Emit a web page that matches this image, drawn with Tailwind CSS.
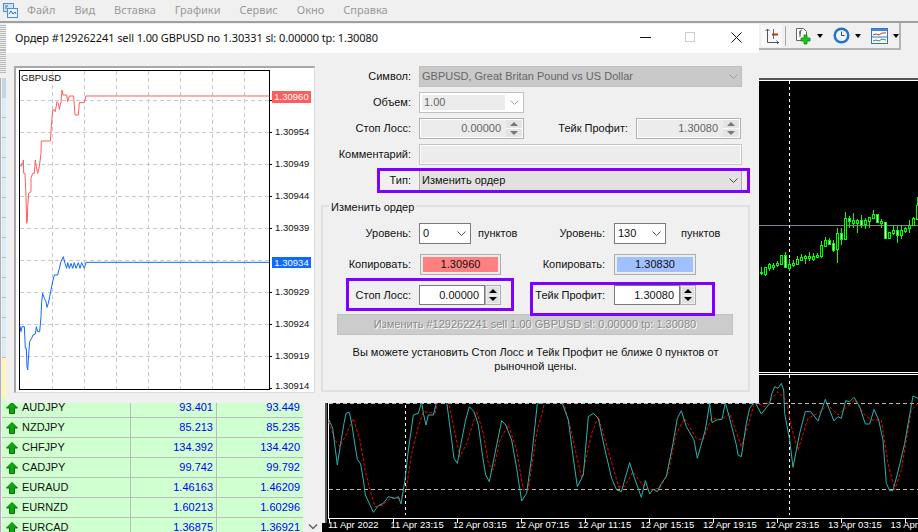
<!DOCTYPE html>
<html lang="ru">
<head>
  <meta charset="UTF-8" />
  <title>Ордер</title>
  <script src="https://cdn.jsdelivr.net/npm/@tailwindcss/browser@4"></script>
</head>
<body class="relative w-[918px] h-[532px] overflow-hidden bg-[#f0f0f0] font-['Noto_Sans',sans-serif] text-[11px] text-[#111]">

  <!-- меню -->
  <div class="h-[23px] flex items-center border-b-2 border-[#a0a0a0] relative">
    <svg class="absolute left-[3px] top-[3px]" width="15" height="15" viewBox="0 0 15 15">
      <rect x="0.5" y="0.5" width="10" height="8" fill="#cfe3fa" stroke="#4a8fd8"/>
      <rect x="4.5" y="5.5" width="10" height="9" fill="#eaf3fd" stroke="#4a8fd8"/>
      <path d="M6 11l2-3 2 3 2-2 1 2" fill="none" stroke="#2d6fb8"/>
      <path d="M2 3h3M2 5h2" stroke="#2d6fb8"/>
    </svg>
    <div class="flex ml-[27px] gap-[19px] text-[#999]">
      <span>Файл</span><span>Вид</span><span>Вставка</span><span>Графики</span><span>Сервис</span><span>Окно</span><span>Справка</span>
    </div>
  </div>

  <!-- панель инструментов -->
  <div class="h-[27px] flex justify-between pr-[17px]">
    <div class="w-[6px] h-[25px] mt-[2px] bg-[repeating-linear-gradient(#b8b8b8_0,#b8b8b8_1px,#f0f0f0_1px,#f0f0f0_2px)]"></div>
    <div class="w-[142px] h-[27px] flex items-center border-r-2 border-b-2 border-[#b4b4b4] pl-[2px]">
      <div class="w-[21px] h-[22px] bg-[#f8f8f8] flex items-center justify-center">
        <svg width="15" height="16" viewBox="0 0 15 16" fill="none">
          <path d="M3.5 1v13.5H15" stroke="#555"/>
          <path d="M1.5 3l2-2 2 2M12.500 12.500l2 2-2 2" stroke="#555"/>
          <path d="M9.500 1v10" stroke="#3a6fb0"/>
          <path d="M8 6.500h6" stroke="#c33a00" stroke-width="2"/>
        </svg>
      </div>
      <div class="w-px h-[20px] bg-[#a8a8a8] ml-[3px]"></div>
      <svg class="ml-[9px]" width="18" height="18" viewBox="0 0 18 18">
        <path d="M1.500 1.500h7l3 3v9h-10z" fill="#fff" stroke="#666"/>
        <path d="M5 5c0-2 2-2 2-2M5 4v6M4 6h2" fill="none" stroke="#444"/>
        <path d="M9 8h3v3h3v3h-3v3H9v-3H6v-3h3z" fill="#19c619" stroke="#0a8a0a" stroke-width="0.800"/>
      </svg>
      <span class="ml-[4px] w-0 h-0 border-x-[3px] border-x-transparent border-t-[4px] border-t-black"></span>
      <svg class="ml-[10px]" width="17" height="17" viewBox="0 0 17 17">
        <circle cx="8.500" cy="8.500" r="8" fill="#1f74cf"/>
        <circle cx="8.500" cy="8.500" r="5.500" fill="#eef4fa"/>
        <path d="M8.500 4.500v4h3" fill="none" stroke="#444"/>
      </svg>
      <span class="ml-[5px] w-0 h-0 border-x-[3px] border-x-transparent border-t-[4px] border-t-black"></span>
      <svg class="ml-[10px]" width="17" height="16" viewBox="0 0 17 16">
        <rect x="0.500" y="0.500" width="16" height="15" fill="#fff" stroke="#2c78c8"/>
        <rect x="1" y="1" width="15" height="2" fill="#3f8ad8"/>
        <path d="M2 7l3-1 3 1 3-2 4 0" fill="none" stroke="#b3402a"/>
        <path d="M1 9h15" stroke="#2c78c8"/>
        <path d="M2 13l3-1 3 1 3-2 4 1" fill="none" stroke="#2a9a3a"/>
      </svg>
      <span class="ml-[5px] w-0 h-0 border-x-[3px] border-x-transparent border-t-[4px] border-t-black"></span>
    </div>
  </div>
  <div class="h-[28px]">
    <div class="w-[6px] h-[24px] bg-[repeating-linear-gradient(#b8b8b8_0,#b8b8b8_1px,#f0f0f0_1px,#f0f0f0_2px)]"></div>
  </div>

  <div class="flex h-[454px]">
    <!-- обзор рынка -->
    <div class="w-[322px] flex shrink-0 font-['Liberation_Sans',sans-serif]">
      <div class="w-[303px] pl-[1px] border-l border-[#b0b0b0] bg-[#f0f0f0]">
        <div class="h-[20px] w-[4px] bg-[#c5d5e2]"></div>
        <div class="h-[260px] bg-[repeating-linear-gradient(#dcecf7_0,#dcecf7_19px,#bbb_19px,#bbb_20px)]"></div>
        <div class="h-[40px] bg-[#fff3b8]"></div>

        <div class="h-[20px] flex items-center border-b border-[#bbb] bg-[#d0ffd0] leading-[19px]">
          <svg class="ml-[4px]" width="12" height="12" viewBox="0 0 12 12"><path d="M6 .5l5.500 5.500H8.500v5.500h-5V6H.5z" fill="#0ea50e" stroke="#067006"/></svg>
          <span class="ml-[4px] w-[108px]">AUDJPY</span>
          <span class="w-[86px] border-l border-[#bbb] h-full text-right pr-[3px] text-[#0000ff]">93.401</span>
          <span class="w-[87px] border-l border-[#bbb] h-full text-right pr-[3px] text-[#0000ff]">93.449</span>
        </div>
        <div class="h-[20px] flex items-center border-b border-[#bbb] bg-[#d0ffd0] leading-[19px]">
          <svg class="ml-[4px]" width="12" height="12" viewBox="0 0 12 12"><path d="M6 .5l5.500 5.500H8.500v5.500h-5V6H.5z" fill="#0ea50e" stroke="#067006"/></svg>
          <span class="ml-[4px] w-[108px]">NZDJPY</span>
          <span class="w-[86px] border-l border-[#bbb] h-full text-right pr-[3px] text-[#0000ff]">85.213</span>
          <span class="w-[87px] border-l border-[#bbb] h-full text-right pr-[3px] text-[#0000ff]">85.235</span>
        </div>
        <div class="h-[20px] flex items-center border-b border-[#bbb] bg-[#d0ffd0] leading-[19px]">
          <svg class="ml-[4px]" width="12" height="12" viewBox="0 0 12 12"><path d="M6 .5l5.500 5.500H8.500v5.500h-5V6H.5z" fill="#0ea50e" stroke="#067006"/></svg>
          <span class="ml-[4px] w-[108px]">CHFJPY</span>
          <span class="w-[86px] border-l border-[#bbb] h-full text-right pr-[3px] text-[#0000ff]">134.392</span>
          <span class="w-[87px] border-l border-[#bbb] h-full text-right pr-[3px] text-[#0000ff]">134.420</span>
        </div>
        <div class="h-[20px] flex items-center border-b border-[#bbb] bg-[#d0ffd0] leading-[19px]">
          <svg class="ml-[4px]" width="12" height="12" viewBox="0 0 12 12"><path d="M6 .5l5.500 5.500H8.500v5.500h-5V6H.5z" fill="#0ea50e" stroke="#067006"/></svg>
          <span class="ml-[4px] w-[108px]">CADJPY</span>
          <span class="w-[86px] border-l border-[#bbb] h-full text-right pr-[3px] text-[#0000ff]">99.742</span>
          <span class="w-[87px] border-l border-[#bbb] h-full text-right pr-[3px] text-[#0000ff]">99.792</span>
        </div>
        <div class="h-[20px] flex items-center border-b border-[#bbb] bg-[#d0ffd0] leading-[19px]">
          <svg class="ml-[4px]" width="12" height="12" viewBox="0 0 12 12"><path d="M6 .5l5.500 5.500H8.500v5.500h-5V6H.5z" fill="#0ea50e" stroke="#067006"/></svg>
          <span class="ml-[4px] w-[108px]">EURAUD</span>
          <span class="w-[86px] border-l border-[#bbb] h-full text-right pr-[3px] text-[#0000ff]">1.46163</span>
          <span class="w-[87px] border-l border-[#bbb] h-full text-right pr-[3px] text-[#0000ff]">1.46209</span>
        </div>
        <div class="h-[20px] flex items-center border-b border-[#bbb] bg-[#d0ffd0] leading-[19px]">
          <svg class="ml-[4px]" width="12" height="12" viewBox="0 0 12 12"><path d="M6 .5l5.500 5.500H8.500v5.500h-5V6H.5z" fill="#0ea50e" stroke="#067006"/></svg>
          <span class="ml-[4px] w-[108px]">EURNZD</span>
          <span class="w-[86px] border-l border-[#bbb] h-full text-right pr-[3px] text-[#0000ff]">1.60213</span>
          <span class="w-[87px] border-l border-[#bbb] h-full text-right pr-[3px] text-[#0000ff]">1.60296</span>
        </div>
        <div class="h-[20px] flex items-center border-b border-[#bbb] bg-[#d0ffd0] leading-[19px]">
          <svg class="ml-[4px]" width="12" height="12" viewBox="0 0 12 12"><path d="M6 .5l5.500 5.500H8.500v5.500h-5V6H.5z" fill="#0ea50e" stroke="#067006"/></svg>
          <span class="ml-[4px] w-[108px]">EURCAD</span>
          <span class="w-[86px] border-l border-[#bbb] h-full text-right pr-[3px] text-[#0000ff]">1.36875</span>
          <span class="w-[87px] border-l border-[#bbb] h-full text-right pr-[3px] text-[#0000ff]">1.36921</span>
        </div>
      </div>
      <div class="flex-1 flex flex-col justify-end items-center pb-[2px]">
        <svg width="10" height="6" viewBox="0 0 10 6" fill="none"><path d="M1 0.500l4 4 4-4" stroke="#666" stroke-width="1.500"/></svg>
      </div>
    </div>

    <!-- графики -->
    <div class="w-[596px] bg-black">
      <svg id="chart" class="block" width="596" height="445" viewBox="322 78 596 445" shape-rendering="crispEdges">
        <rect x="322" y="78" width="3" height="445" fill="#f0f0f0"/>
        <rect x="325" y="78" width="2" height="445" fill="#555"/>
        <rect x="325" y="78" width="593" height="2" fill="#555"/>
        <rect x="327" y="80" width="591" height="1" fill="#fff"/>
        <rect x="328" y="81" width="1" height="437" fill="#fff"/>
        <rect x="329" y="225" width="589" height="1" fill="#77838f"/>
        <rect x="329" y="372" width="589" height="1" fill="#fff"/>
        <rect x="329" y="374" width="589" height="1" fill="#fff"/>
        <path d="M329 403.500H918M329 489.500H918" stroke="#bbb" stroke-dasharray="4 3"/>
        <path d="M789.500 81V372M789.500 375V515M405.500 375V515" stroke="#fff" stroke-dasharray="3 3"/>
        <g id="candles" stroke="#00ff00" stroke-width="1"></g>
        <g transform="translate(320 390) scale(.33333)" fill="none" shape-rendering="auto">
          <polyline stroke="#ff0000" stroke-width="3" stroke-dasharray="9 6" points="26,95 45,150 60,170 80,130 100,85 120,150 135,240 150,300 165,350 190,345 210,325 240,325 258,300 275,190 295,110 310,65 345,70 355,30 385,30 405,130 420,200 440,160 470,65 490,130 505,220 520,240 540,150 565,105 590,180 610,300 625,300 650,130 675,35 730,35 755,130 785,265 815,130 835,80 860,165 890,270 900,300"/>
          <polyline stroke="#2ab5ad" stroke-width="3" points="26,88 38,115 45,170 52,225 62,160 72,100 78,70 88,67 95,100 105,165 112,208 122,222 130,270 136,315 150,345 160,367 175,347 190,340 205,320 225,325 235,320 243,342 255,270 265,180 280,75 295,70 305,35 310,70 318,105 325,75 340,75 350,35 380,35 395,150 402,205 412,220 425,150 437,90 448,50 462,65 475,105 488,200 497,255 508,275 525,190 545,92 557,105 575,150 590,235 605,333 620,310 635,200 652,40 725,35 745,90 758,190 772,290 790,255 805,80 820,70 835,85 855,180 875,265 890,300 900,302"/>
          <g transform="translate(894 0)">
            <polyline stroke="#ff0000" stroke-width="3" stroke-dasharray="9 6" points="0,290 20,290 45,245 70,280 90,300 125,295 150,250 175,130 200,85 235,145 255,150 280,85 310,88 335,70 370,170 395,90 410,35 440,50 480,5 505,30 520,110 540,180 570,85 600,70 630,45 660,75 710,30 740,75 760,90 790,90 810,220 830,300 850,240 880,60 900,40"/>
            <polyline stroke="#2ab5ad" stroke-width="3" points="0,300 10,305 20,270 35,218 48,260 70,322 82,272 95,312 105,298 118,305 130,280 145,260 165,160 178,85 190,62 205,110 228,150 238,205 262,120 275,40 282,98 295,90 312,88 322,38 335,85 355,165 360,195 370,200 385,100 395,55 410,35 430,72 455,40 462,10 470,-10 480,-5 490,-20 497,0 500,70 515,150 525,232 545,130 562,65 578,65 600,93 622,28 648,93 660,80 670,85 683,32 695,35 708,22 725,50 742,102 755,102 768,58 782,90 795,150 805,280 815,302 825,302 845,225 860,160 885,18 900,25"/>
          </g>
        </g>
        <rect x="328" y="518" width="590" height="1" fill="#fff"/>
        <path d="M329.500 519v4M393.500 519v4M457.500 519v4M521.500 519v4M585.500 519v4M649.500 519v4M713.500 519v4M777.500 519v4M841.500 519v4M905.500 519v4" stroke="#fff"/>
      </svg>
      <div class="flex h-[14px] -mt-[5px] pl-[6px] text-white font-['Liberation_Sans',sans-serif] text-[9.5px] leading-[14px] whitespace-nowrap">
        <span class="w-[64px]">11 Apr 2022</span>
        <span class="w-[64px]">11 Apr 23:15</span>
        <span class="w-[64px]">12 Apr 03:15</span>
        <span class="w-[64px]">12 Apr 07:15</span>
        <span class="w-[64px]">12 Apr 11:15</span>
        <span class="w-[64px]">12 Apr 15:15</span>
        <span class="w-[64px]">12 Apr 19:15</span>
        <span class="w-[64px]">12 Apr 23:15</span>
        <span class="w-[64px]">13 Apr 03:15</span>
        <span>13 Apr</span>
      </div>
    </div>
  </div>

  <!-- диалог -->
  <div class="absolute left-[6px] top-[24px] w-[753px] h-[379px] bg-[#f0f0f0] font-['Liberation_Sans',sans-serif]">
    <div class="h-[29px] bg-white flex items-center pl-[9px] relative font-['Noto_Sans',sans-serif] tracking-[-0.1px]">
      <span>Ордер #129262241 sell 1.00 GBPUSD по 1.30331 sl: 0.00000 tp: 1.30080</span>
      <svg class="absolute left-[634px] top-[13px]" width="11" height="1"><rect width="11" height="1" fill="#111"/></svg>
      <svg class="absolute left-[679px] top-[8px]" width="10" height="10"><rect x="0.500" y="0.500" width="9" height="9" fill="none" stroke="#ccc"/></svg>
      <svg class="absolute left-[725px] top-[8px]" width="11" height="11"><path d="M.5.5l10 10M10.500.5l-10 10" stroke="#111"/></svg>
    </div>

    <div class="flex pl-[8px] pt-[13px]">
      <!-- мини график -->
      <div class="relative w-[301px] h-[327px] border-l-2 border-t-2 border-r border-b border-l-[#a8a8a8] border-t-[#a8a8a8] border-r-[#dcdcdc] border-b-[#dcdcdc] bg-white shrink-0 text-[9.5px]">
        <svg class="block" width="298" height="324" viewBox="15 68 298 324" shape-rendering="crispEdges">
          <path d="M51.500 71V389M83.500 71V389M115.500 71V389M147.500 71V389M179.500 71V389M211.500 71V389M243.500 71V389" stroke="#c8c8c8" stroke-dasharray="4 3"/>
          <path d="M19 100.500H268M19 132.500H268M19 164.500H268M19 196.500H268M19 228.500H268M19 260.500H268M19 292.500H268M19 324.500H268M19 356.500H268" stroke="#c8c8c8" stroke-dasharray="4 3"/>
          <rect x="18.500" y="70.500" width="250" height="319" fill="none" stroke="#000"/>
          <path d="M268 100.500h3M268 132.500h3M268 164.500h3M268 196.500h3M268 228.500h3M268 292.500h3M268 324.500h3M268 356.500h3M268 388.500h3" stroke="#000"/>
          <g transform="translate(0 60) scale(.33333)" fill="none" stroke="#ff5c5c" stroke-width="3" shape-rendering="auto">
            <polyline points="57,318 62,318 62,310 67,310 67,300 68,340 72,340 75,410 77,490 79,480 80,440 83,400 90,395 90,355 95,340 100,340 103,300 106,320 110,340 115,320 120,280 121,243 148,243 152,185 155,150 160,150 163,155 168,125 172,130 175,148 180,125 183,90 186,105 197,105 200,125 205,108 218,108 222,165 232,165 235,128 250,128 255,108 805,108"/>
          </g>
          <g transform="translate(0 230) scale(.33333)" fill="none" stroke="#0f68ff" stroke-width="3" shape-rendering="auto">
            <polyline points="57,288 60,305 63,290 70,290 73,355 76,355 78,410 80,420 83,375 86,335 92,325 96,315 103,312 106,290 110,305 116,305 120,260 122,215 125,190 130,205 135,215 138,232 142,220 146,200 150,180 155,155 160,135 170,135 175,115 180,95 187,80 192,100 197,115 200,98 205,115 210,100 215,115 220,98 225,115 232,98 237,115 242,98 250,115 255,97 805,97"/>
          </g>
        </svg>
        <span class="absolute left-[5px] top-[3px] leading-[14px]">GBPUSD</span>
        <div class="absolute left-[256px] top-[23px] w-[39px] h-[12px] bg-[#ff5c5c] text-white leading-[12px] text-center">1.30960</div>
        <div class="absolute left-[256px] top-[189px] w-[39px] h-[11px] bg-[#0f68ff] text-white leading-[11px] text-center">1.30934</div>
        <span class="absolute left-[259px] top-[57px] leading-[14px]">1.30954</span>
        <span class="absolute left-[259px] top-[89px] leading-[14px]">1.30949</span>
        <span class="absolute left-[259px] top-[121px] leading-[14px]">1.30944</span>
        <span class="absolute left-[259px] top-[153px] leading-[14px]">1.30939</span>
        <span class="absolute left-[259px] top-[217px] leading-[14px]">1.30929</span>
        <span class="absolute left-[259px] top-[249px] leading-[14px]">1.30924</span>
        <span class="absolute left-[259px] top-[281px] leading-[14px]">1.30919</span>
        <span class="absolute left-[259px] top-[311px] leading-[14px]">1.30914</span>
      </div>

      <!-- форма -->
      <div class="w-[429px] ml-[6px] flex flex-col gap-[5px]">
        <div class="flex h-[21px] items-center">
          <label class="w-[90px] text-right">Символ:</label>
          <div class="ml-[8px] w-[323px] h-full bg-[#c9c9c9] border border-[#c0c0c0] flex items-center justify-between pl-[2px] pr-[3px] text-[#666]">
            <span>GBPUSD, Great Britan Pound vs US Dollar</span>
            <svg width="9" height="5" fill="none"><path d="M.5.5l4 4 4-4" stroke="#999"/></svg>
          </div>
        </div>
        <div class="flex h-[21px] items-center">
          <label class="w-[90px] text-right">Объем:</label>
          <div class="ml-[8px] w-[105px] h-full bg-white border border-[#c0c0c0] flex items-center p-[2px]">
            <span class="w-[83px] h-full bg-[#ececec] text-[#666] pl-[2px] leading-[15px]">1.00</span>
            <svg class="ml-[5px]" width="9" height="5" fill="none"><path d="M.5.5l4 4 4-4" stroke="#aaa"/></svg>
          </div>
        </div>
        <div class="flex h-[21px] items-center">
          <label class="w-[90px] text-right">Стоп Лосс:</label>
          <div class="ml-[8px] w-[105px] h-full border border-[#b0b0b0] bg-white flex p-px">
            <span class="flex-1 bg-[#ececec] text-right pr-[5px] text-[#666] leading-[17px]">0.00000</span>
            <div class="w-[16px] flex flex-col gap-px bg-white">
              <div class="flex-1 bg-[#e4e4e4] flex items-center justify-center"><span class="w-0 h-0 border-x-[4px] border-x-transparent border-b-[4px] border-b-[#777]"></span></div>
              <div class="flex-1 bg-[#e4e4e4] flex items-center justify-center"><span class="w-0 h-0 border-x-[4px] border-x-transparent border-t-[4px] border-t-[#777]"></span></div>
            </div>
          </div>
          <label class="w-[104px] text-right">Тейк Профит:</label>
          <div class="ml-[8px] w-[105px] h-full border border-[#b0b0b0] bg-white flex p-px">
            <span class="flex-1 bg-[#ececec] text-right pr-[5px] text-[#666] leading-[17px]">1.30080</span>
            <div class="w-[16px] flex flex-col gap-px bg-white">
              <div class="flex-1 bg-[#e4e4e4] flex items-center justify-center"><span class="w-0 h-0 border-x-[4px] border-x-transparent border-b-[4px] border-b-[#777]"></span></div>
              <div class="flex-1 bg-[#e4e4e4] flex items-center justify-center"><span class="w-0 h-0 border-x-[4px] border-x-transparent border-t-[4px] border-t-[#777]"></span></div>
            </div>
          </div>
        </div>
        <div class="flex h-[21px] items-center">
          <label class="w-[90px] text-right">Комментарий:</label>
          <div class="ml-[8px] w-[323px] h-full bg-[#ececec] border border-[#c4c4c4] outline outline-white -outline-offset-2"></div>
        </div>
        <div class="flex h-[21px] items-center">
          <label class="w-[90px] text-right">Тип:</label>
          <div class="ml-[8px] w-[323px] h-full bg-[#e1e1e1] border border-[#adadad] flex items-center justify-between pl-[2px] pr-[3px]">
            <span>Изменить ордер</span>
            <svg width="9" height="5" fill="none"><path d="M.5.5l4 4 4-4" stroke="#444"/></svg>
          </div>
        </div>

        <!-- группа -->
        <div class="relative mt-[9px] h-[187px] border-2 border-[#e0e0e0] pt-[16px]">
          <span class="absolute left-[6px] -top-[7px] bg-[#f0f0f0] px-[2px] leading-[14px]">Изменить ордер</span>

          <div class="flex h-[21px] items-center">
            <label class="w-[88px] text-right">Уровень:</label>
            <div class="ml-[8px] w-[52px] h-full bg-white border border-[#7a7a7a] flex items-center justify-between pl-[3px] pr-[4px]">
              <span>0</span><svg width="9" height="5" fill="none"><path d="M.5.5l4 4 4-4" stroke="#555"/></svg>
            </div>
            <span class="ml-[7px] w-[47px]">пунктов</span>
            <label class="w-[80px] text-right">Уровень:</label>
            <div class="ml-[9px] w-[52px] h-full bg-white border border-[#7a7a7a] flex items-center justify-between pl-[3px] pr-[4px]">
              <span>130</span><svg width="9" height="5" fill="none"><path d="M.5.5l4 4 4-4" stroke="#555"/></svg>
            </div>
            <span class="ml-[15px]">пунктов</span>
          </div>

          <div class="flex h-[21px] items-center mt-[10px]">
            <label class="w-[88px] text-right">Копировать:</label>
            <div class="ml-[9px] w-[81px] h-[21px] border border-[#adadad] bg-[#ececec] p-[2px]">
              <div class="h-full bg-[#ff8080] text-center leading-[15px]">1.30960</div>
            </div>
            <label class="w-[104px] text-right">Копировать:</label>
            <div class="ml-[9px] w-[82px] h-[21px] border border-[#adadad] bg-[#ececec] p-[2px]">
              <div class="h-full bg-[#a0c0ff] text-center leading-[15px]">1.30830</div>
            </div>
          </div>

          <div class="flex h-[20px] items-center mt-[10px]">
            <label class="w-[88px] text-right">Стоп Лосс:</label>
            <div class="ml-[8px] w-[66px] h-full bg-white border border-[#7a7a7a] text-right pr-[5px] leading-[18px]">0.00000</div>
            <div class="w-[16px] h-full flex flex-col gap-px border border-[#adadad] p-px">
              <div class="flex-1 bg-[#e1e1e1] flex items-center justify-center"><span class="w-0 h-0 border-x-[4px] border-x-transparent border-b-[4px] border-b-black"></span></div>
              <div class="flex-1 bg-[#e1e1e1] flex items-center justify-center"><span class="w-0 h-0 border-x-[4px] border-x-transparent border-t-[4px] border-t-black"></span></div>
            </div>
            <label class="w-[104px] text-right">Тейк Профит:</label>
            <div class="ml-[9px] w-[66px] h-full bg-white border border-[#7a7a7a] text-right pr-[5px] leading-[18px]">1.30080</div>
            <div class="w-[16px] h-full flex flex-col gap-px border border-[#adadad] p-px">
              <div class="flex-1 bg-[#e1e1e1] flex items-center justify-center"><span class="w-0 h-0 border-x-[4px] border-x-transparent border-b-[4px] border-b-black"></span></div>
              <div class="flex-1 bg-[#e1e1e1] flex items-center justify-center"><span class="w-0 h-0 border-x-[4px] border-x-transparent border-t-[4px] border-t-black"></span></div>
            </div>
          </div>

          <div class="ml-[14px] mt-[9px] w-[396px] h-[21px] bg-[#cccccc] border border-[#c2c2c2] text-center text-[#8a8a8a] leading-[19px] text-shadow-[1px_1px_0_#fff]">Изменить #129262241 sell 1.00 GBPUSD sl: 0.00000 tp: 1.30080</div>

          <p class="mt-[10px] text-center leading-[14px] whitespace-nowrap">Вы можете установить Стоп Лосс и Тейк Профит не ближе 0 пунктов от<br>рыночной цены.</p>
        </div>
      </div>
    </div>
  </div>

  <!-- выделения поверх скриншота -->
  <div class="absolute left-[377px] top-[168px] w-[373px] h-[25px] border-[3px] border-[#7f00ff]"></div>
  <div class="absolute left-[346px] top-[278px] w-[168px] h-[33px] border-[3px] border-[#7f00ff]"></div>
  <div class="absolute left-[530px] top-[282px] w-[185px] h-[34px] border-[3px] border-[#7f00ff]"></div>

  <script>
    // x, верх/низ тени, верх/низ тела, заливка
    const candles = [
      [19,232,256,246,249,0],[31,230,258,232,252,0],[43,220,243,223,233,0],[55,220,240,224,230,0],
      [67,214,232,220,226,0],[79,195,224,196,221,0],[91,187,232,196,230,1],[103,207,244,222,233,0],
      [115,211,231,218,225,0],[127,198,222,208,221,0],[139,193,213,201,209,0],[151,195,222,198,204,0],
      [163,186,212,198,204,0],[175,190,212,198,206,0],[187,190,204,195,200,0],[199,153,204,165,197,0],
      [211,141,168,150,167,0],[223,144,166,150,162,1],[235,150,186,160,180,1],[247,114,219,130,176,0],
      [259,113,165,130,147,1],[271,67,147,85,146,0],[283,79,113,85,92,1],[295,70,113,91,99,0],
      [307,88,129,91,99,0],[319,76,113,91,106,1],[331,85,117,91,102,0],[343,82,114,82,92,0],
      [355,60,88,72,84,0],[367,72,97,72,96,1],[379,87,114,94,99,0],[391,96,147,97,143,1],
      [403,126,148,126,143,0],[415,106,136,121,130,0],[427,108,159,120,134,1],[439,106,147,121,134,0],
      [451,111,128,114,122,0],[463,90,128,106,115,0],[475,82,109,85,106,0],[487,22,90,45,86,0]
    ];
    const g = document.getElementById('candles');
    const px = v => Math.round(v / 3);
    let html = '';
    candles.forEach(c => {
      const x = 755 + Math.floor(c[0] / 3) + 0.5;
      const y = v => 190 + px(v);
      html += `<path d="M${x} ${y(c[1])}V${y(c[2])}"/>`;
      html += `<rect x="${x - 1}" y="${y(c[3]) + 0.5}" width="2" height="${Math.max(1, px(c[4]) - px(c[3]))}" fill="${c[5] ? '#fff' : '#000'}"/>`;
    });
    g.innerHTML = html;
  </script>
</body>
</html>
